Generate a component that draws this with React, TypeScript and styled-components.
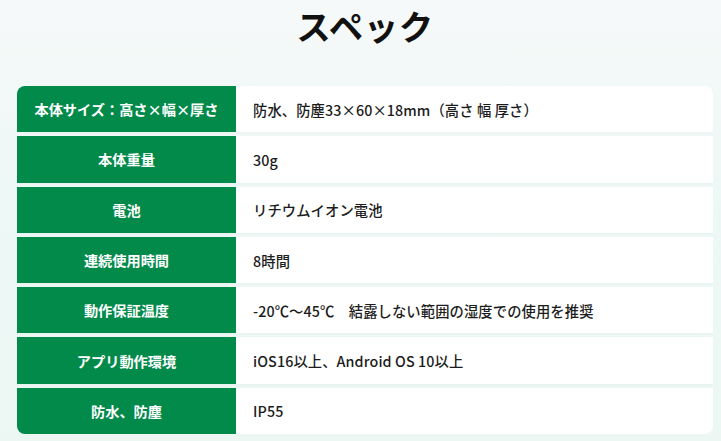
import React from "react";
import styled, { createGlobalStyle } from "styled-components";

const specs = [
  { label: "本体サイズ：高さ×幅×厚さ", value: "防水、防塵33×60×18mm（高さ 幅 厚さ）" },
  { label: "本体重量", value: "30g" },
  { label: "電池", value: "リチウムイオン電池" },
  { label: "連続使用時間", value: "8時間" },
  { label: "動作保証温度", value: "-20℃〜45℃　結露しない範囲の湿度での使用を推奨" },
  { label: "アプリ動作環境", value: "iOS16以上、Android OS 10以上" },
  { label: "防水、防塵", value: "IP55" },
];

const GlobalStyle = createGlobalStyle`
  html, body {
    margin: 0;
    padding: 0;
  }
  body {
    width: 721px;
    height: 441px;
    overflow: hidden;
    background: linear-gradient(180deg, #f6f9f9 0%, #eef8f6 40%, #ecf7f4 100%);
    font-family: "Noto Sans CJK JP", "Noto Sans", sans-serif;
  }
`;

const Page = styled.div`
  display: flex;
  flex-direction: column;
  align-items: center;
  padding: 0 8px 0 17px;
  box-sizing: border-box;
  width: 721px;
  height: 441px;
`;

const Title = styled.h2`
  margin: 0;
  height: 86px;
  padding-top: 1px;
  box-sizing: border-box;
  font-size: 34.5px;
  line-height: 48px;
  font-weight: 700;
  color: #111;
  letter-spacing: 0.5px;
`;

const Table = styled.div`
  display: flex;
  flex-direction: column;
  gap: 4px;
  width: 100%;
  border-radius: 8px;
  overflow: hidden;
`;

const Row = styled.div`
  display: grid;
  grid-template-columns: 219px 1fr;
  height: 46.3px;
  background: #ffffff;
  box-shadow: 0 1px 2px rgba(0, 80, 60, 0.04);
`;

const Label = styled.div`
  display: flex;
  align-items: center;
  justify-content: center;
  background: #028a4b;
  color: #ffffff;
  font-size: 14.2px;
  font-weight: 700;
`;

const Value = styled.div`
  display: flex;
  align-items: center;
  padding-left: 17px;
  color: #1c1c1c;
  font-size: 14.3px;
  font-weight: 500;
  letter-spacing: 0.1px;
`;

export default function App() {
  return (
    <>
      <GlobalStyle />
      <Page>
        <Title>スペック</Title>
        <Table>
          {specs.map((s) => (
            <Row key={s.label}>
              <Label>{s.label}</Label>
              <Value>{s.value}</Value>
            </Row>
          ))}
        </Table>
      </Page>
    </>
  );
}
